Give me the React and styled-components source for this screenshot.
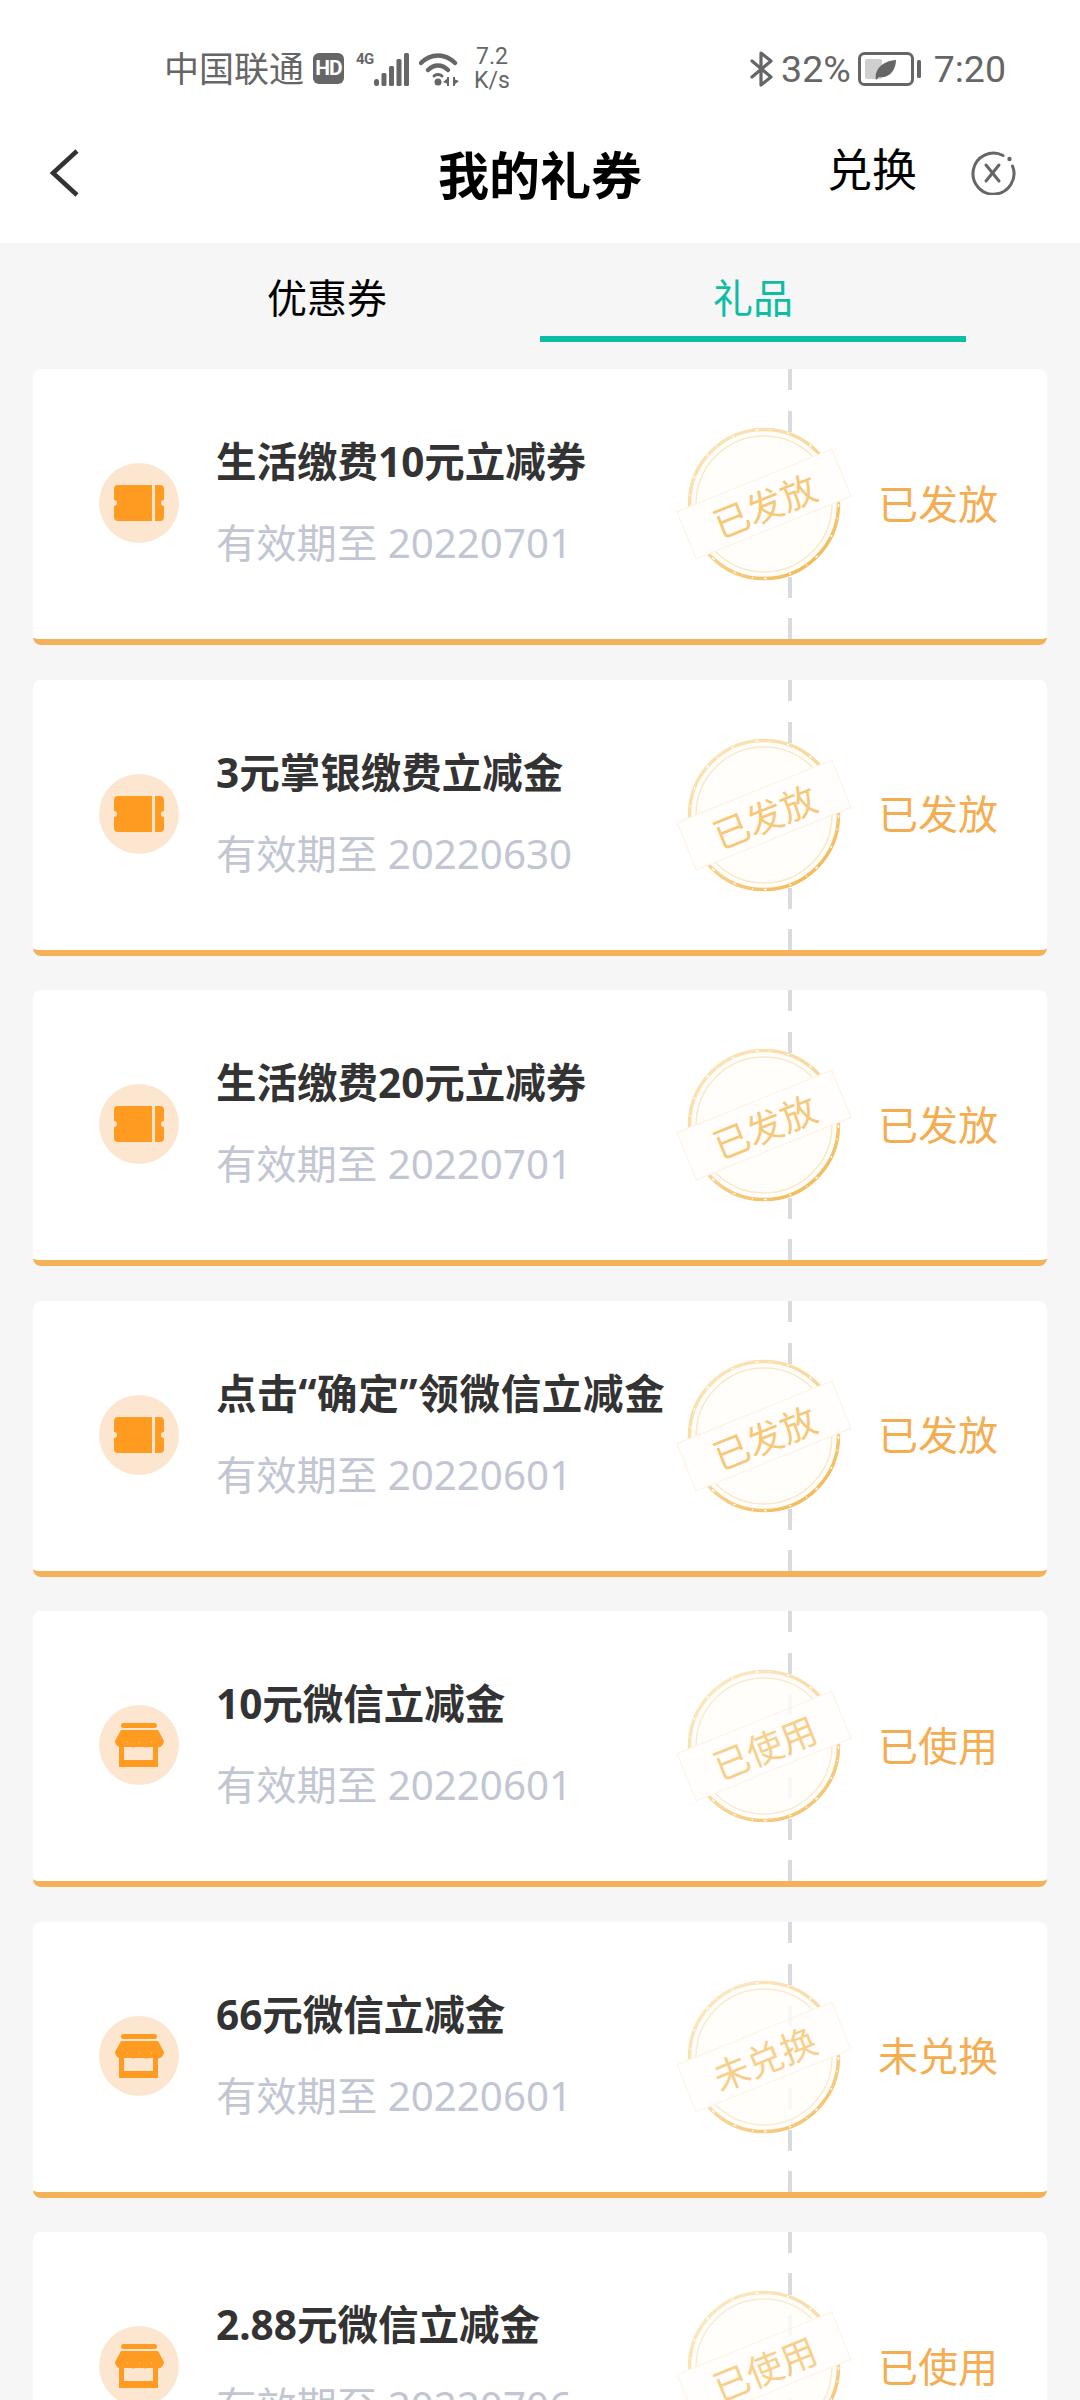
import React from "react";
import styled, { createGlobalStyle } from "styled-components";

const gifts = [
  { title: "生活缴费10元立减券", date: "20220701", status: "已发放", icon: "ticket" },
  { title: "3元掌银缴费立减金", date: "20220630", status: "已发放", icon: "ticket" },
  { title: "生活缴费20元立减券", date: "20220701", status: "已发放", icon: "ticket" },
  { title: "点击“确定”领微信立减金", date: "20220601", status: "已发放", icon: "ticket", wide: true },
  { title: "10元微信立减金", date: "20220601", status: "已使用", icon: "store" },
  { title: "66元微信立减金", date: "20220601", status: "未兑换", icon: "store" },
  { title: "2.88元微信立减金", date: "20220706", status: "已使用", icon: "store" },
];

function TicketIcon() {
  return (
    <svg width="50" height="36" viewBox="0 0 50 36" fill="#ff9b20">
      <path d="M4 0H38V36H4a4 4 0 0 1-4-4V21a3 3 0 0 0 0-6V4a4 4 0 0 1 4-4z" />
      <path d="M41 0H46a4 4 0 0 1 4 4V15a3 3 0 0 0 0 6V32a4 4 0 0 1-4 4H41z" />
    </svg>
  );
}

function StoreIcon() {
  return (
    <svg width="49" height="44" viewBox="0 0 49 44" fill="#ff9b20">
      <rect x="6" y="0" width="36" height="5" rx="2.500" />
      <path fillRule="evenodd" d="M4 20H43V44H4zM9 24V37H38V24z" />
      <path d="M6 7H43L49 18a6.120 6.400 0 0 1-12.250 0a6.120 6.400 0 0 1-12.250 0a6.120 6.400 0 0 1-12.250 0a6.120 6.400 0 0 1-12.250 0z" />
    </svg>
  );
}

function StampRing() {
  return (
    <svg width="156" height="156" viewBox="0 0 156 156" fill="none">
      <defs>
        <linearGradient id="stampEdge" x1="0.150" y1="0.100" x2="0.800" y2="0.900">
          <stop offset="0" stopColor="#fbe3b6" />
          <stop offset="0.550" stopColor="#f8d494" />
          <stop offset="1" stopColor="#f3bd5e" />
        </linearGradient>
      </defs>
      <circle cx="78" cy="78" r="76" fill="#fffefb" />
      <circle cx="78" cy="78" r="74.500" stroke="url(#stampEdge)" strokeWidth="3.500" />
      <circle cx="78" cy="78" r="74.500" stroke="#fffefb" strokeWidth="1.500" strokeDasharray="3 11 1 17 2 23" />
      <circle cx="78" cy="78" r="68" stroke="#fae8c8" strokeWidth="1.500" />
    </svg>
  );
}

function App() {
  return (
    <Page>
      <GlobalStyle />
      <TopArea>
        <StatusBar>
          <StatusGroup>
            <Carrier>中国联通</Carrier>
            <HdBadge>HD</HdBadge>
            <NetType>4G</NetType>
            <svg width="35" height="33" viewBox="0 0 35 33" fill="#666">
              <rect x="0" y="26" width="5" height="7" rx="2.500" />
              <rect x="7.500" y="20" width="5" height="13" rx="1.500" />
              <rect x="15" y="13" width="5" height="20" rx="1.500" />
              <rect x="22.500" y="6" width="5" height="27" rx="1.500" />
              <rect x="30" y="0" width="5" height="33" rx="1.500" />
            </svg>
            <WifiWrap>
              <svg width="40" height="33" viewBox="0 0 40 33" fill="none" stroke="#666" strokeWidth="4.500" strokeLinecap="round">
                <path d="M2 10C12 0 26 0 36 10" />
                <path d="M9 17C15 11 23 11 29 17" />
                <path d="M15 23C17 21 21 21 23 23" strokeWidth="3" />
                <circle cx="19" cy="29" r="3.500" fill="#666" stroke="none" />
                <path d="M29 24V33" strokeWidth="2" strokeLinecap="butt" />
                <path d="M35 24V33" strokeWidth="2" strokeLinecap="butt" />
                <path d="M24 29L29 25V31z" fill="#666" stroke="none" />
                <path d="M40 28L35 32V26z" fill="#666" stroke="none" />
              </svg>
            </WifiWrap>
            <Speed>
              <span>7.2</span>
              <span>K/s</span>
            </Speed>
          </StatusGroup>
          <StatusGroup>
            <svg width="24" height="36" viewBox="0 0 24 36" fill="none" stroke="#666" strokeWidth="3.200" strokeLinejoin="round" strokeLinecap="round">
              <path d="M2 10L21 26L11 34V2L21 10L2 26" />
            </svg>
            <StatusText>32%</StatusText>
            <svg width="64" height="34" viewBox="0 0 64 34">
              <rect x="1.500" y="1.500" width="53" height="31" rx="5" fill="none" stroke="#666" strokeWidth="3" />
              <rect x="7" y="7" width="17" height="20" rx="2" fill="#cfcfcf" />
              <path d="M18 28C16 18 24 9 38 8C38 18 31 27 21 25L18 28z" fill="#666" />
              <rect x="59" y="8" width="4" height="18" rx="1.500" fill="#666" />
            </svg>
            <Clock>7:20</Clock>
          </StatusGroup>
        </StatusBar>
        <NavBar>
          <BackSlot>
            <svg width="30" height="48" viewBox="0 0 30 48" fill="none" stroke="#333" strokeWidth="4.500">
              <path d="M28 2L4 24L28 46" />
            </svg>
          </BackSlot>
          <NavTitle>我的礼券</NavTitle>
          <NavActions>
            <Exchange>兑换</Exchange>
            <CloseSlot>
              <svg width="46" height="44" viewBox="0 0 46 44" fill="none" stroke="#666" strokeWidth="3" strokeLinecap="round">
                <path d="M33 4.500A20.500 20.500 0 1 0 42.500 15" />
                <circle cx="39.500" cy="8" r="2.200" fill="#666" stroke="none" />
                <path d="M16 14L29 30" />
                <path d="M29 14L16 30" />
              </svg>
            </CloseSlot>
          </NavActions>
        </NavBar>
      </TopArea>
      <Tabs>
        <Tab>优惠券</Tab>
        <Tab $active>礼品</Tab>
      </Tabs>
      <CardList>
        {gifts.map((gift) => (
          <Card key={gift.title}>
            <DashLine />
            <IconCircle>{gift.icon === "ticket" ? <TicketIcon /> : <StoreIcon />}</IconCircle>
            <CardText>
              <CardTitle $wide={gift.wide}>{gift.title}</CardTitle>
              <CardDate>有效期至 {gift.date}</CardDate>
            </CardText>
            <Stamp $faint={gift.status !== "已发放"}>
              <StampRing />
              <Ribbon>{gift.status}</Ribbon>
            </Stamp>
            <StatusLabel>{gift.status}</StatusLabel>
          </Card>
        ))}
      </CardList>
    </Page>
  );
}

const cjkStack = `"Noto Sans", "Noto Sans CJK SC", sans-serif`;

const GlobalStyle = createGlobalStyle`
  html, body {
    margin: 0;
    padding: 0;
    background: #f6f6f6;
  }
  * {
    box-sizing: border-box;
  }
`;

const Page = styled.div`
  width: 1080px;
  height: 2400px;
  overflow: hidden;
  background: #f6f6f6;
  font-family: ${cjkStack};
`;

const TopArea = styled.header`
  background: #fff;
  height: 243px;
`;

const StatusBar = styled.div`
  height: 93px;
  padding: 45px 74px 0 164px;
  display: flex;
  justify-content: space-between;
  align-items: center;
`;

const StatusGroup = styled.div`
  height: 48px;
  display: flex;
  align-items: center;
`;

const Carrier = styled.span`
  margin-bottom: 4px;
  font-family: "Noto Sans CJK SC", sans-serif;
  font-size: 35px;
  line-height: 40px;
  color: #666;
`;

const HdBadge = styled.span`
  width: 31px;
  height: 31px;
  margin: 0 0 2px 9px;
  border-radius: 6px;
  background: #666;
  color: #fff;
  font-family: "Roboto", sans-serif;
  font-size: 21px;
  font-weight: 700;
  letter-spacing: -1px;
  display: flex;
  align-items: center;
  justify-content: center;
`;

const NetType = styled.span`
  width: 18px;
  margin-left: 12px;
  margin-bottom: 20px;
  font-family: "Roboto", sans-serif;
  font-size: 15px;
  line-height: 16px;
  font-weight: 700;
  letter-spacing: -0.5px;
  color: #666;
`;

const WifiWrap = styled.span`
  display: flex;
  margin-left: 10px;
`;

const Speed = styled.span`
  margin-left: 15px;
  display: flex;
  flex-direction: column;
  align-items: center;
  font-family: "Roboto", sans-serif;
  font-size: 23px;
  line-height: 24px;
  color: #666;
`;

const StatusText = styled.span`
  margin: 0 7px 0 7px;
  font-family: "Roboto", sans-serif;
  font-size: 37.500px;
  line-height: 40px;
  color: #666;
`;

const Clock = styled(StatusText)`
  margin: 0 0 0 12px;
`;

const NavBar = styled.div`
  height: 150px;
  display: grid;
  grid-template-columns: 1fr auto 1fr;
  align-items: center;
`;

const BackSlot = styled.div`
  display: flex;
  padding: 10px 0 0 49px;
`;

const NavTitle = styled.h1`
  margin: 10px 0 0;
  font-family: "Noto Sans CJK SC", sans-serif;
  font-size: 51px;
  line-height: 60px;
  font-weight: 700;
  color: #000;
`;

const NavActions = styled.div`
  display: flex;
  justify-content: flex-end;
  align-items: center;
  padding-right: 64px;
`;

const Exchange = styled.span`
  font-family: "Noto Sans CJK SC", sans-serif;
  font-size: 45px;
  line-height: 52px;
  color: #000;
`;

const CloseSlot = styled.span`
  display: flex;
  margin: 10px 0 0 53px;
`;

const Tabs = styled.nav`
  display: flex;
  padding: 0 114px;
  margin-bottom: 27px;
`;

const Tab = styled.div`
  width: 426px;
  height: 99px;
  padding-top: 32px;
  text-align: center;
  font-family: "Noto Sans CJK SC", sans-serif;
  font-size: 40px;
  line-height: 42px;
  color: ${(p) => (p.$active ? "#0dbda4" : "#000")};
  border-bottom: 6px solid ${(p) => (p.$active ? "#0dbda4" : "transparent")};
`;

const CardList = styled.div`
  display: flex;
  flex-direction: column;
  gap: 34.500px;
  padding: 0 33px;
`;

const Card = styled.article`
  position: relative;
  flex-shrink: 0;
  height: 276px;
  padding-left: 66px;
  display: flex;
  align-items: center;
  background: #fff;
  border-radius: 8px;
  border-bottom: 6px solid #f5b157;
`;

const DashLine = styled.i`
  position: absolute;
  left: 755px;
  top: 0;
  bottom: 0;
  width: 4px;
  background: repeating-linear-gradient(to bottom, #d9dbe0 0 21px, transparent 21px 41.500px);
`;

const IconCircle = styled.div`
  flex-shrink: 0;
  width: 80px;
  height: 80px;
  margin-bottom: 2px;
  border-radius: 50%;
  background: #fde6cf;
  display: flex;
  align-items: center;
  justify-content: center;
`;

const CardText = styled.div`
  width: 460px;
  flex-shrink: 0;
  margin: 0 0 3px 37px;
  display: flex;
  flex-direction: column;
  gap: 25px;
`;

const CardTitle = styled.div`
  font-size: 40.500px;
  line-height: 56px;
  font-weight: 700;
  letter-spacing: ${(p) => (p.$wide ? "0.7px" : "0")};
  color: #333;
  white-space: nowrap;
`;

const CardDate = styled.div`
  font-size: 40.300px;
  line-height: 56px;
  color: #c2c6d2;
  white-space: nowrap;
`;

const Stamp = styled.div`
  position: relative;
  flex-shrink: 0;
  width: 176px;
  height: 156px;
  display: flex;
  justify-content: center;
  opacity: ${(p) => (p.$faint ? 0.85 : 1)};
`;

const Ribbon = styled.div`
  position: absolute;
  left: 4px;
  top: 52px;
  width: 168px;
  height: 52px;
  transform: rotate(-22deg);
  background: #fffefc;
  border: 1px solid #fdf1de;
  text-align: center;
  font-family: "Noto Sans CJK SC", sans-serif;
  font-size: 36px;
  line-height: 50px;
  color: #f6c878;
`;

const StatusLabel = styled.div`
  width: 116px;
  margin: 0 0 5px 26px;
  flex-shrink: 0;
  text-align: center;
  font-family: "Noto Sans CJK SC", sans-serif;
  font-size: 40px;
  line-height: 46px;
  color: #f5ad52;
  white-space: nowrap;
`;

export default App;
